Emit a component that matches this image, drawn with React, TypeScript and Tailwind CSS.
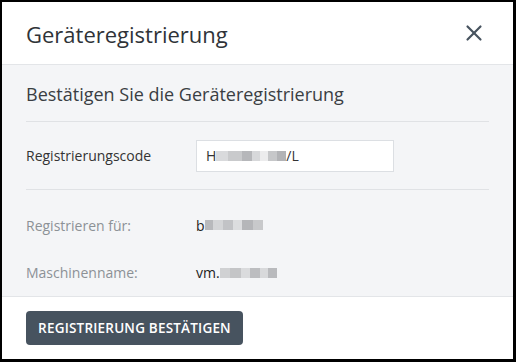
import { X } from "lucide-react"

function Blur({ widths }: { widths: { w: number; c: string }[] }) {
  return (
    <span className="inline-flex h-[10px] items-center">
      {widths.map((b, i) => (
        <span key={i} className="inline-block h-[10px]" style={{ width: b.w, background: b.c }} />
      ))}
    </span>
  )
}

export default function App() {
  return (
    <div className="w-[516px] h-[362px] border-l-2 border-t-2 border-r-[3px] border-b-[3px] border-black flex flex-col bg-white font-['Open_Sans',sans-serif] text-[#333]">
      <div className="h-[64px] flex items-center justify-between pl-[24px] pr-[26px] border-b border-[#e3e5e8]">
        <h1 className="text-[22px] text-[#2f3338] pt-[2px]">Geräteregistrierung</h1>
        <X className="w-[26px] h-[26px] text-[#47535f]" strokeWidth={2} />
      </div>

      <div className="flex-1 bg-[#f4f5f7] px-[24px] border-b border-[#e3e5e8]">
        <div className="h-[57px] flex items-center border-b border-[#e0e2e5]">
          <h2 className="text-[18px] text-[#3a3e43] pt-[2px]">Bestätigen Sie die Geräteregistrierung</h2>
        </div>
        <div className="h-[68px] flex items-center border-b border-[#e0e2e5]">
          <label className="w-[170px] text-[14px] text-[#333]">Registrierungscode</label>
          <div className="w-[198px] h-[32px] bg-white border border-[#dcdfe3] flex items-center px-[9px] text-[14px] text-[#333]">
            <span>H</span>
            <Blur
              widths={[
                { w: 12, c: "#d9dadc" },
                { w: 14, c: "#c9cacc" },
                { w: 10, c: "#b6b7ba" },
                { w: 8, c: "#d7d8da" },
                { w: 8, c: "#ececed" },
                { w: 9, c: "#c6c7c9" },
                { w: 9, c: "#b2b3b6" },
              ]}
            />
            <span>/L</span>
          </div>
        </div>
        <div className="h-[70px] flex items-center">
          <span className="w-[170px] text-[14px] text-[#8c9196]">Registrieren für:</span>
          <span className="text-[14px] text-[#222] flex items-center">
            b
            <Blur
              widths={[
                { w: 8, c: "#b8b9bc" },
                { w: 10, c: "#d4d5d7" },
                { w: 10, c: "#c2c3c6" },
                { w: 9, c: "#dcdddf" },
                { w: 11, c: "#b5b6b9" },
                { w: 10, c: "#c8c9cb" },
              ]}
            />
          </span>
        </div>
        <div className="h-[36px] flex items-start pt-[2px]">
          <span className="w-[170px] text-[14px] text-[#8c9196]">Maschinenname:</span>
          <span className="text-[14px] text-[#222] flex items-center">
            vm.
            <Blur
              widths={[
                { w: 10, c: "#d0d1d3" },
                { w: 11, c: "#c4c5c7" },
                { w: 9, c: "#dadbdd" },
                { w: 10, c: "#bcbdc0" },
                { w: 8, c: "#d8d9db" },
                { w: 9, c: "#b9babd" },
              ]}
            />
          </span>
        </div>
      </div>

      <div className="h-[63px] flex items-center px-[24px]">
        <button className="h-[34px] w-[217px] rounded-[4px] bg-[#47535f] text-white text-[13.5px] font-semibold tracking-[0.2px]">
          REGISTRIERUNG BESTÄTIGEN
        </button>
      </div>
    </div>
  )
}
